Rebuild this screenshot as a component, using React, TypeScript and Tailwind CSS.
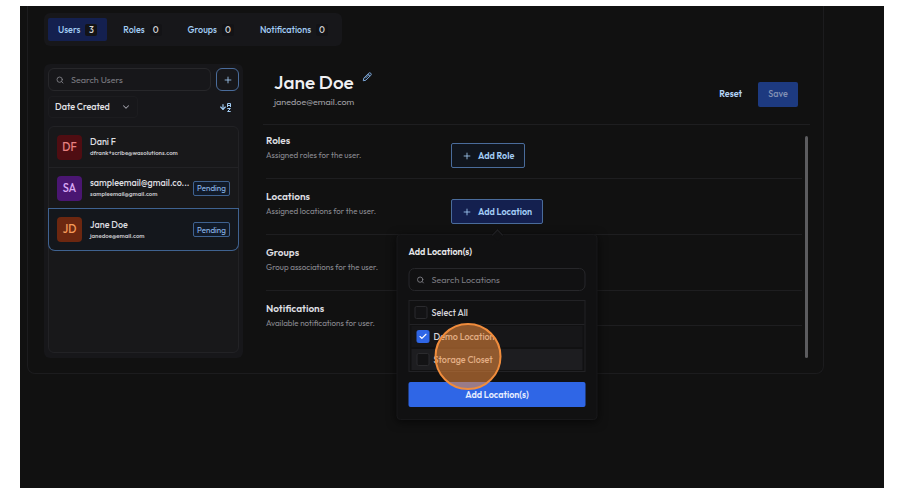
import { ArrowDown, Check, ChevronDown, Plus, Search } from "lucide-react";
import type { ReactNode } from "react";

const tabs = [
  { label: "Users", count: 3 },
  { label: "Roles", count: 0 },
  { label: "Groups", count: 0 },
  { label: "Notifications", count: 0 },
];

const users = [
  {
    initials: "DF",
    name: "Dani F",
    email: "dfrank+scribe@wasolutions.com",
    avatar: "bg-[#4f0d12] text-[#e88080]",
    pending: false,
  },
  {
    initials: "SA",
    name: "sampleemail@gmail.co...",
    email: "sampleemail@gmail.com",
    avatar: "bg-[#4a1672] text-[#d9a8f5]",
    pending: true,
  },
  {
    initials: "JD",
    name: "Jane Doe",
    email: "janedoe@email.com",
    avatar: "bg-[#6c2710] text-[#f59a58]",
    pending: true,
  },
];

const Tabs = () => (
  <nav className="flex w-fit gap-1.5 rounded-md bg-[#17171a] px-1 py-[5px]">
    {tabs.map((tab, i) => (
      <button
        key={tab.label}
        className={`flex h-[23px] items-center gap-[5px] rounded-xs px-2.5 text-[9px] font-medium text-[#a3cdf5] ${
          i === 0 ? "bg-[#14204f]" : ""
        }`}
      >
        {tab.label}
        <span className="flex h-3 w-3 items-center justify-center rounded-xs bg-[#131316] text-[#d6d6d8]">
          {tab.count}
        </span>
      </button>
    ))}
  </nav>
);

const SearchBox = ({ label }: { label: string }) => (
  <label className="flex h-[23px] min-w-0 flex-1 items-center gap-[7px] rounded-md border border-[#27272a] px-[7px] text-[#85858b]">
    <Search className="size-2 shrink-0" strokeWidth={2.5} />
    <input
      type="text"
      aria-label={label}
      placeholder={label}
      className="w-full min-w-0 bg-transparent text-[9px] outline-none placeholder:text-[#7c7c82]"
    />
  </label>
);

const SortIcon = () => (
  <span className="flex items-center gap-px">
    <ArrowDown className="-mr-px h-3 w-2" strokeWidth={3.5} />
    <svg viewBox="0 0 4 11" className="h-[11px] w-1" fill="none" stroke="currentColor" strokeWidth="1">
      <path d="M.5 5V1.500H3.500V5M.5 3.500H3.500" />
      <path d="M.3 6.500H3.400L.6 9.500H3.700" />
    </svg>
  </span>
);

const UserSidebar = () => (
  <aside className="flex w-[199px] shrink-0 flex-col rounded-md bg-[#17171a] px-1 pt-1 pb-[5px]">
    <div className="flex gap-[5px]">
      <SearchBox label="Search Users" />
      <button
        aria-label="Add user"
        className="flex size-[23px] items-center justify-center rounded-md border border-[#4a6c9b] text-[#a3cdf5]"
      >
        <Plus className="size-2.5" />
      </button>
    </div>
    <div className="mt-[5px] flex h-[22px] items-center justify-between pr-2">
      <div className="relative w-[90px]">
        <select
          aria-label="Sort by"
          className="block h-[22px] w-full appearance-none rounded-sm border border-[#1c1c1f] bg-transparent pl-1.5 text-[9px] font-medium text-[#e4e4e7]"
        >
          <option>Date Created</option>
        </select>
        <ChevronDown className="pointer-events-none absolute top-1.5 right-[7px] size-2.5 text-[#a1a1aa]" strokeWidth={2.5} />
      </div>
      <button aria-label="Sort direction" className="text-[#a3cdf5]">
        <SortIcon />
      </button>
    </div>
    <ul className="mt-2 flex-1 rounded-md border border-[#222225] bg-[#18181a]">
      {users.map((user, i) => (
        <li key={user.initials}>
          <button
            className={`flex h-[41px] w-full items-center gap-2 px-2 text-left ${
              i === 2 ? "rounded-b-md bg-[#14171c] ring-1 ring-[#3f6290]" : "border-b border-[#222225]"
            }`}
          >
            <span
              className={`flex size-[25px] shrink-0 items-center justify-center rounded-sm text-[11px] font-medium ${user.avatar}`}
            >
              {user.initials}
            </span>
            <span className="min-w-0 flex-1 whitespace-nowrap">
              <span className="block text-[9px] leading-3 font-medium text-[#dedee0]">{user.name}</span>
              <span className="block text-[6px] leading-[10px] font-semibold text-[#c4c4c8]">{user.email}</span>
            </span>
            {user.pending && (
              <span className="flex h-[15px] w-[37px] shrink-0 items-center justify-center rounded-xs border border-[#3f6290] bg-[#111a28] text-[8px] text-[#90bdf0]">
                Pending
              </span>
            )}
          </button>
        </li>
      ))}
    </ul>
  </aside>
);

const Checkbox = ({ label, checked = false }: { label: string; checked?: boolean }) => (
  <label className="flex items-center gap-1 text-[9px] font-medium text-[#d4d4d8]">
    <span className="relative size-[13px]">
      <input
        type="checkbox"
        defaultChecked={checked}
        className="peer block size-[13px] appearance-none rounded-xs border border-[#2b2b2e] bg-[#131315] checked:border-[#2f66e6] checked:bg-[#2f66e6]"
      />
      <Check
        className="pointer-events-none absolute inset-0 m-auto hidden size-[9px] text-white peer-checked:block"
        strokeWidth={3}
      />
    </span>
    {label}
  </label>
);

const LocationPopover = () => (
  <div className="absolute top-full left-1/2 z-10 mt-2.5 w-[201px] -translate-x-1/2 rounded-sm border border-[#18181a] bg-[#111112] px-[11px] pt-2.5 pb-3 shadow-[0_2px_10px_rgba(0,0,0,0.6)]">
    <span className="absolute -top-1 left-1/2 size-2 -translate-x-1/2 rotate-45 border-t border-l border-[#222225] bg-[#111112]" />
    <h3 className="text-[9px] leading-[14px] font-semibold text-[#e8e8ea]">Add Location(s)</h3>
    <div className="mt-[9px] flex">
      <SearchBox label="Search Locations" />
    </div>
    <div className="mt-[9px] border border-[#222225]">
      <div className="flex h-6 items-center border-b border-[#222225] px-[5px]">
        <Checkbox label="Select All" />
      </div>
      <div className="flex flex-col gap-0.5 px-0.5 py-px">
        <div className="flex h-[21px] items-center bg-[#161618] px-[5px]">
          <Checkbox label="Demo Location" checked />
        </div>
        <div className="flex h-[21px] items-center bg-[#1d1d20] px-[5px]">
          <Checkbox label="Storage Closet" />
        </div>
      </div>
    </div>
    <button className="mt-2.5 h-[25px] w-full rounded-xs bg-[#2f66e6] text-[9px] font-semibold text-[#e6edff]">
      Add Location(s)
    </button>
    {/* click marker */}
    <span className="pointer-events-none absolute top-[88px] left-[37px] size-[67px] rounded-full border-2 border-[#f08c3c] bg-[#f08c3c]/55" />
  </div>
);

const AddButton = ({ label, active = false }: { label: string; active?: boolean }) => (
  <button
    className={`mt-2.5 flex h-[25px] items-center gap-1.5 rounded-xs border border-[#4a6c9b] px-2.5 text-[9px] font-semibold text-[#a3cdf5] ${
      active ? "bg-[#14204f]" : "bg-[#10151d]"
    }`}
  >
    <Plus className="size-2.5" strokeWidth={2} />
    {label}
  </button>
);

const Section = ({ title, text, children }: { title: string; text: string; children?: ReactNode }) => (
  <section className="flex min-h-14 border-b border-[#1e1e20] py-2.5 first:min-h-0 first:pt-2 last:border-b-0 last:pb-0">
    <div className="w-[185px] shrink-0">
      <h2 className="text-[10px] leading-4 font-semibold text-[#dedee0]">{title}</h2>
      <p className="text-[8px] leading-3 text-[#8b8b91]">{text}</p>
    </div>
    {children}
  </section>
);

const UserDetails = () => (
  <div className="flex min-w-0 flex-1 flex-col">
    <header className="flex h-[61px] items-center justify-between border-b border-[#1e1e20] pr-3 pl-[11px]">
      <div className="pb-2">
        <div className="flex items-start gap-2">
          <h1 className="text-[19px] leading-6 font-medium text-[#f0f0f2]">Jane Doe</h1>
          <button aria-label="Edit name" className="mt-0.5 text-[#7ea9dc]">
            <svg
              viewBox="0 0 24 24"
              className="size-2.5"
              fill="none"
              stroke="currentColor"
              strokeWidth="2.4"
              strokeLinejoin="round"
            >
              <path d="M3 21l1.500-6.500L16 3a3.200 3.200 0 0 1 5 5L9.500 19.500Z" />
              <path d="M8 15 16.500 6.500M14 5l5 5" />
            </svg>
          </button>
        </div>
        <p className="text-[9px] leading-4 text-[#a0a0a5]">janedoe@email.com</p>
      </div>
      <div className="flex items-center gap-4">
        <button className="text-[9px] font-semibold text-[#b3d4f8]">Reset</button>
        <button className="h-[25px] w-10 rounded-xs bg-[#1d3a80] text-[9px] font-medium text-[#8290b4]">Save</button>
      </div>
    </header>
    <div className="flex flex-1 pr-0.5 pl-[3px]">
      <div className="min-w-0 flex-1">
        <Section title="Roles" text="Assigned roles for the user.">
          <AddButton label="Add Role" />
        </Section>
        <Section title="Locations" text="Assigned locations for the user.">
          <div className="relative">
            <AddButton label="Add Location" active />
            <LocationPopover />
          </div>
        </Section>
        <Section title="Groups" text="Group associations for the user." />
        <Section title="Notifications" text="Available notifications for user.">
          <div className="mb-8 h-[25px] flex-1 border-b border-[#1e1e20]" />
        </Section>
      </div>
      <div className="mt-[11px] ml-[3px] w-[3px] rounded-full bg-[#5c5c5f]" />
    </div>
  </div>
);

const App = () => {
  return (
    <div className="flex min-h-screen bg-white pt-1.5 pr-[15px] pb-[3px] pl-5 font-[Outfit,Lato,sans-serif]">
      <main className="flex-1 bg-[#111111] pr-[60px] pl-[7px]">
        <div className="rounded-b-lg border border-t-0 border-[#1c1c1e] pt-[7px] pr-[13px] pb-[15px] pl-4">
          <Tabs />
          <div className="mt-[18px] flex gap-5">
            <UserSidebar />
            <UserDetails />
          </div>
        </div>
      </main>
    </div>
  );
};

export default App;
